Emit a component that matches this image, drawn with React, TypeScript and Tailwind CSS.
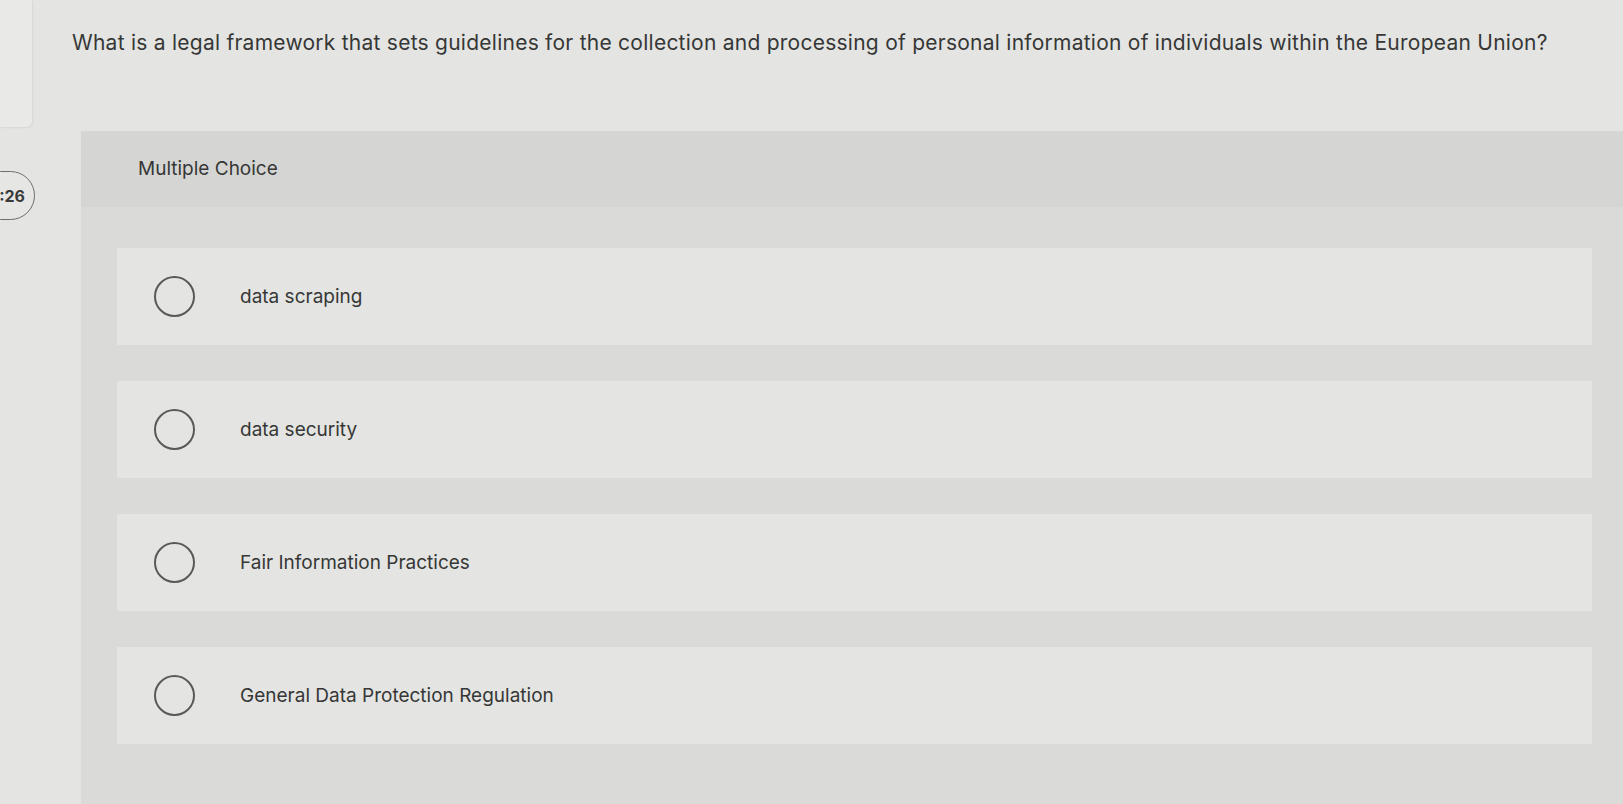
const options = [
  "data scraping",
  "data security",
  "Fair Information Practices",
  "General Data Protection Regulation",
];

function Radio() {
  return <span className="h-[41px] w-[41px] shrink-0 rounded-full border-2 border-[#585958]" />;
}

export default function App() {
  return (
    <div
      className="h-[804px] w-full overflow-hidden bg-[#e4e5e3] text-[#363736]"
      style={{ fontFamily: "Inter, 'Liberation Sans', sans-serif" }}
    >
      {/* question row */}
      <div className="flex h-[131px]">
        <div className="h-[127px] w-[32px] shrink-0 rounded-br-md bg-[#e9eae8] shadow-[1px_1px_2px_rgba(0,0,0,0.06)]" />
        <h1 className="ml-[40px] pt-[29px] text-[21px] font-normal leading-[28px] tracking-[0.25px] whitespace-nowrap">
          What is a legal framework that sets guidelines for the collection and processing of personal information of individuals within the European Union?
        </h1>
      </div>

      <div className="flex">
        {/* timer */}
        <div className="w-[81px] shrink-0 pt-[40px]">
          <div className="-ml-[24px] flex h-[49px] w-[59px] items-center justify-end rounded-full border-[1.5px] border-[#6c6d6c] bg-[#e6e7e5] pr-[9px] text-[16px] font-bold text-[#3a3a3a]">
            :26
          </div>
        </div>

        {/* question panel */}
        <div className="h-[673px] flex-1 bg-[#dadbd9]">
          <div className="flex h-[76px] items-center bg-[#d5d6d4] pl-[57px] text-[19px]">
            Multiple Choice
          </div>
          <div className="flex flex-col gap-[36px] pt-[41px] pl-[36px] pr-[31px]">
            {options.map((o) => (
              <label key={o} className="flex h-[97px] items-center bg-[#e4e5e3] pl-[37px]">
                <Radio />
                <span className="ml-[45px] pt-[2px] text-[19px]">{o}</span>
              </label>
            ))}
          </div>
        </div>
      </div>
    </div>
  );
}
